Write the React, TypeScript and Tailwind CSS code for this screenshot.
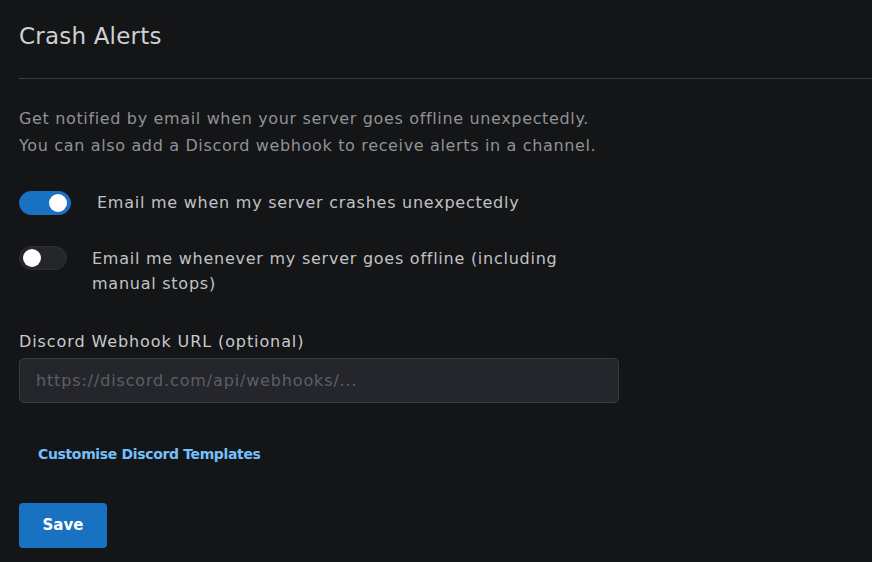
import React, { useState } from "react";

function Toggle({ on, wide }: { on: boolean; wide?: boolean }) {
  return (
    <button
      type="button"
      className={`relative shrink-0 h-6 rounded-full border ${wide ? "w-[52px]" : "w-[48px]"} ${
        on ? "bg-[#1971c2] border-[#1971c2]" : "bg-[#25262b] border-[#2c2e33]"
      }`}
    >
      <span
        className={`absolute top-1/2 -translate-y-1/2 h-[18px] w-[18px] rounded-full bg-white ${
          on ? "right-[3px]" : "left-[3px]"
        }`}
      />
    </button>
  );
}

export default function App() {
  const [url, setUrl] = useState("");
  return (
    <div
      className="min-h-screen bg-[#141517] pl-[19px] text-[#c1c2c5] tracking-[0.75px]"
      style={{ fontFamily: '"DejaVu Sans", "Open Sans", sans-serif' }}
    >
      <h2 className="pt-[22px] text-[23px] leading-[28px] font-medium tracking-[0.2px] text-[#cfd0d3]">
        Crash Alerts
      </h2>
      <div className="mt-[28px] h-px bg-[#3a3b40]" />

      <div className="w-[600px]">
        <p className="mt-[26px] text-[16px] leading-[27px] tracking-[0.65px] text-[#909296]">
          Get notified by email when your server goes offline unexpectedly.
          <br />
          You can also add a Discord webhook to receive alerts in a channel.
        </p>

        <div className="mt-[31px] flex items-center gap-[26px]">
          <Toggle on wide />
          <span className="text-[16px] leading-[25px]">Email me when my server crashes unexpectedly</span>
        </div>

        <div className="mt-[31px] flex items-start gap-[25px]">
          <Toggle on={false} />
          <span className="max-w-[500px] text-[16px] leading-[25px]">
            Email me whenever my server goes offline (including manual stops)
          </span>
        </div>

        <label className="mt-[34px] block text-[16px] leading-[24px] tracking-[0.9px] text-[#c9cacd]">
          Discord Webhook URL (optional)
        </label>
        <input
          value={url}
          onChange={(e) => setUrl(e.target.value)}
          placeholder="https://discord.com/api/webhooks/..."
          className="mt-[4px] block h-[45px] w-full rounded-[5px] border border-[#373a40] bg-[#25262b] px-4 text-[16px] tracking-[0.85px] text-[#c1c2c5] placeholder:text-[#5c5f66] outline-none"
        />

        <a className="mt-[41px] block pl-[19px] text-[14px] leading-[20px] font-bold tracking-[-0.35px] text-[#74c0fc]">
          Customise Discord Templates
        </a>

        <button
          type="button"
          className="mt-[39px] h-[45px] w-[88px] rounded-[4px] bg-[#1971c2] text-[15px] font-bold tracking-normal text-white"
        >
          Save
        </button>
      </div>
    </div>
  );
}
